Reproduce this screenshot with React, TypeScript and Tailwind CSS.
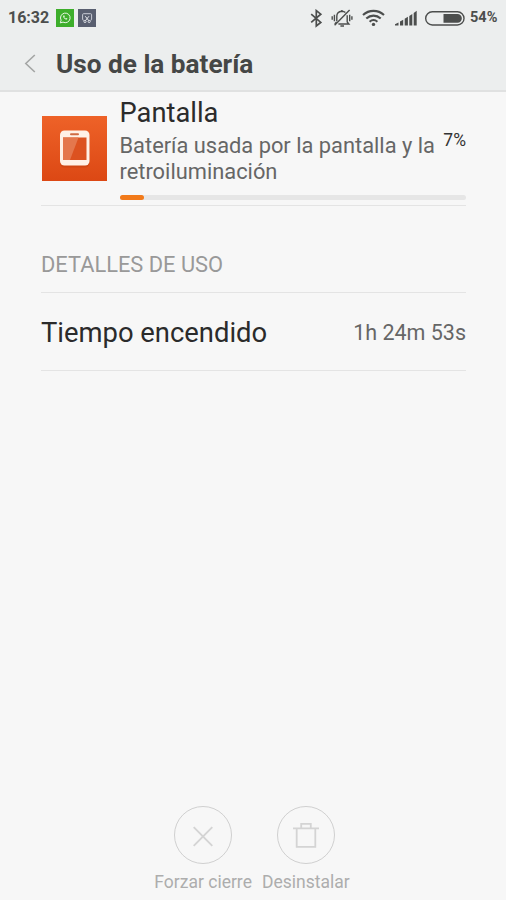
import React from "react";

const details = [{ id: "screen-on", label: "Tiempo encendido", value: "1h 24m 53s" }];

const WhatsappBadge = () => (
  <svg className="h-[18px] w-[18px]" viewBox="0 0 18 18" fill="none">
    <rect width="18" height="18" fill="#3dae2b" />
    <path d="M4.300 13.900l.8-2.700a4.800 4.800 0 1 1 1.900 1.900z" stroke="#e9f8e5" strokeWidth="1" strokeLinejoin="round" />
    <path d="M7.200 6.700c-.5 1.700 1.900 4.200 3.700 3.900l.6-.9-1.300-.7-.6.5c-.6-.2-1.100-.8-1.300-1.300l.5-.6-.6-1.300z" fill="#e9f8e5" />
  </svg>
);

const ScreenshotBadge = () => (
  <svg className="h-[18px] w-[18px]" viewBox="0 0 18 18" fill="none">
    <rect width="18" height="18" fill="#595f70" />
    <path d="M5.900 11.300h-.3a1 1 0 0 1-1-1v-4.600a1 1 0 0 1 1-1h7a1 1 0 0 1 1 1v4.600a1 1 0 0 1-1 1h-.3" stroke="#c9ccd6" />
    <path d="M7.200 7.200l3.600 4.500M11 7.200l-3.600 4.500" stroke="#e3e5ea" />
    <circle cx="7" cy="12.500" r="1.100" stroke="#e3e5ea" strokeWidth="0.900" />
    <circle cx="11.200" cy="12.500" r="1.100" stroke="#e3e5ea" strokeWidth="0.900" />
  </svg>
);

const BluetoothIcon = () => (
  <svg className="h-[19px] w-[13px]" viewBox="0 0 13 19" fill="none" stroke="#4c4e4d" strokeWidth="1.700">
    <path d="M1.200 5.200l9.600 8.200-4.500 3.600V1.600l4.500 3.600-9.600 8.200" />
  </svg>
);

const VibrateIcon = () => (
  <svg className="h-[19px] w-[22px]" viewBox="0 0 22 19" fill="none" stroke="#4c4e4d" strokeWidth="1.400">
    <path d="M5.800 12.300V7.300c0-2.900 1.900-4.900 5-5.100 1.600 0 2.800.5 3.600 1.300M16.200 6.300v6.700l1.700 2H7.400M5.600 13l-1.800 2" />
    <path d="M9.400 17h3.600M10.900 2.300V1.100M18.600 0.900L3.600 16.300" />
    <path d="M1.200 7.200v3.600M3.400 5.700v6.500M18.700 5.700v6.500M20.900 7.200v3.600" />
  </svg>
);

const WifiIcon = () => (
  <svg className="h-[18px] w-[23px]" viewBox="0 0 23 18" fill="none" stroke="#4c4e4d" strokeWidth="2.100">
    <path d="M1 6.100c6-5.600 15-5.600 21 0M4.300 9.500c4.200-3.900 10.200-3.900 14.400 0M7.600 12.700c2.400-2.100 5.400-2.100 7.800 0" />
    <circle cx="11.500" cy="15.400" r="1.700" fill="#4c4e4d" stroke="none" />
  </svg>
);

const SignalIcon = () => (
  <svg className="h-[16px] w-[22px]" viewBox="0 0 22 16" fill="#4c4e4d">
    <path d="M0 15.500v-1.200l3.500-1.800v3zM5 15.500v-4l3.200-1.700v5.700zM9.700 15.500V8.700l3.200-1.900v8.700zM14.300 15.500V5.900l3-2v11.600zM18.700 15.500V3l3-2.200v14.700z" />
  </svg>
);

const BatteryIcon = () => (
  <svg className="h-[15px] w-[40px]" viewBox="0 0 40 15" fill="none">
    <rect x="0.700" y="0.700" width="38.300" height="13.300" rx="6.600" stroke="#4c4e4d" strokeWidth="1.400" />
    <path d="M18.500 3H32.500a4.300 4.300 0 0 1 0 8.700H18.500z" fill="#4c4e4d" />
  </svg>
);

const PhoneIcon = () => (
  <svg className="h-[65px] w-[65px]" viewBox="0 0 65 65" fill="none">
    <defs>
      <linearGradient id="tile" x1="0" y1="0" x2="0" y2="1">
        <stop offset="0" stopColor="#ee6228" />
        <stop offset="1" stopColor="#dc4814" />
      </linearGradient>
    </defs>
    <rect width="65" height="65" fill="url(#tile)" />
    <rect x="18" y="16" width="29.500" height="35.500" rx="4.500" fill="#bf3d0e" opacity="0.500" />
    <rect x="18" y="14.500" width="29.500" height="35" rx="4.500" fill="#fff0e6" />
    <rect x="21" y="21.500" width="23.500" height="22.500" fill="#dc5220" />
    <path d="M21 21.500h15.500L28 44h-7z" fill="#e4774d" />
    <rect x="28" y="17.300" width="9" height="2" rx="1" fill="#cf6a43" />
  </svg>
);

const CloseIcon = () => (
  <svg className="mt-px h-[22px] w-[22px]" viewBox="0 0 22 22" fill="none" stroke="#d4d4d4" strokeWidth="1.900">
    <path d="M1.700 2.200l18.600 18.600M20.300 2.200L1.700 20.800" />
  </svg>
);

const TrashIcon = () => (
  <svg className="h-[26px] w-[26px]" viewBox="0 0 26 26" fill="none" stroke="#d4d4d4" strokeWidth="1.800">
    <path d="M0 6.300h26M3.700 6.300v18.500h18.600V6.300M8.200 6V1.800h9.600V6" />
  </svg>
);

const actions = [
  { id: "force-stop", label: "Forzar cierre", icon: <CloseIcon /> },
  { id: "uninstall", label: "Desinstalar", icon: <TrashIcon /> },
];

const App = () => {
  const usage = 7;

  return (
    <div className="flex h-[900px] w-[506px] flex-col overflow-hidden bg-[#f7f7f7] font-['Roboto',sans-serif]">
      <header className="h-[92px] shrink-0 border-b-2 border-[#e0e1e1] bg-[#eceeee]">
        {/* Status bar */}
        <div className="flex h-9 items-center pl-[8px] pr-[9px] text-[#4c4e4d]">
          <span className="w-[48px] whitespace-nowrap text-[16px] font-bold leading-9">16:32</span>
          <div className="flex gap-1">
            <WhatsappBadge />
            <ScreenshotBadge />
          </div>
          <div className="ml-auto flex items-center">
            <BluetoothIcon />
            <div className="ml-[8px]"><VibrateIcon /></div>
            <div className="ml-[9px]"><WifiIcon /></div>
            <div className="ml-[10px]"><SignalIcon /></div>
            <div className="ml-[8px]"><BatteryIcon /></div>
            <span className="ml-[5px] w-[27px] whitespace-nowrap text-[14.500px] font-bold">54%</span>
          </div>
        </div>

        {/* Title bar */}
        <div className="flex h-[54px] items-center pl-[24px]">
          <svg className="h-[19px] w-[12px]" viewBox="0 0 12 19" fill="none" stroke="#a4a6a5" strokeWidth="1.600">
            <path d="M10.800 1L1.800 9.500l9 8.500" />
          </svg>
          <h1 className="ml-5 pt-px text-[26.200px] font-bold leading-[30px] text-[#454746]">Uso de la batería</h1>
        </div>
      </header>

      <main className="flex-1 pl-[41px] pr-[40px]">
        <section className="flex h-[114px] border-b border-[#e4e4e4] pl-px">
          <div className="pt-6">
            <PhoneIcon />
          </div>
          <div className="ml-[12.500px] flex-1 pt-[3px]">
            <h2 className="text-[27.300px] leading-9 text-[#2b2b2b]">Pantalla</h2>
            <div className="flex justify-between pt-px">
              <p className="whitespace-nowrap pt-px text-[21.850px] leading-[26px] text-[#666]">
                Batería usada por la pantalla y la
                <br />
                retroiluminación
              </p>
              <span className="text-[17.500px] leading-[16px] text-[#333]">{usage}%</span>
            </div>
            <div className="mt-[10px] h-[5px] rounded-full bg-[#e6e6e6]">
              <div className="h-full rounded-full bg-[#f27a1a]" style={{ width: `${usage}%` }} />
            </div>
          </div>
        </section>

        <h3 className="h-[87px] border-b border-[#e4e4e4] pt-[46px] text-[21.850px] leading-[26px] text-[#999]">
          DETALLES DE USO
        </h3>
        {details.map((item) => (
          <div key={item.id} className="flex h-[78px] items-center justify-between border-b border-[#e4e4e4]">
            <span className="pt-[5px] text-[27.400px] text-[#2b2b2b]">{item.label}</span>
            <span className="pt-1 text-[21.500px] text-[#666]">{item.value}</span>
          </div>
        ))}
      </main>

      <footer className="flex justify-center gap-[10px] pb-[6px] pr-[2px]">
        {actions.map((action) => (
          <div key={action.id} className="flex flex-col items-center">
            <div className="flex h-[58px] w-[58px] items-center justify-center rounded-full border border-[#d0d0d0]">
              {action.icon}
            </div>
            <span className="mt-[6px] text-[17.500px] leading-6 text-[#adadad]">{action.label}</span>
          </div>
        ))}
      </footer>
    </div>
  );
};

export default App;
